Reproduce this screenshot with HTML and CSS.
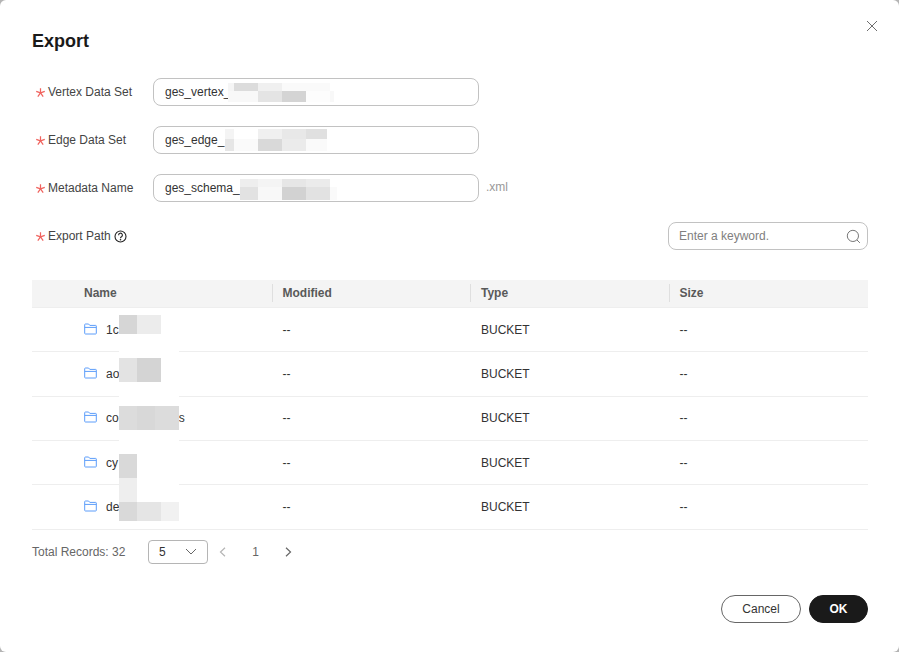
FILE: index.html
```html
<!DOCTYPE html>
<html lang="en">
<head>
<meta charset="utf-8">
<title>Export</title>
<link rel="stylesheet" href="styles.css">
</head>
<body>
<div class="dialog">
  <button class="close" aria-label="Close"><svg width="12" height="12" viewBox="0 0 12 12"><path d="M1 1l10 10M11 1L1 11" stroke="#6e6e6e" stroke-width="1" fill="none"/></svg></button>
  <h1 class="title">Export</h1>

  <div class="form-row">
    <label class="label"><svg class="star" viewBox="0 0 8 8"><path d="M4 .2V4.4M.2 3l3.8 1.4M7.8 3L4 4.4M1.6 7.6L4 4.4M6.4 7.6L4 4.4" stroke="#f0635e" stroke-width="1.1" fill="none"/></svg>Vertex Data Set</label>
    <div class="input"><span>ges_vertex_</span>
      <div class="mosaic m-vertex">
        <i class="b" style="left:75px;top:5px;width:6px;height:8px;background:#f5f5f5"></i><i class="b" style="left:81px;top:5px;width:24px;height:8px;background:#dcdcdc"></i><i class="b" style="left:105px;top:5px;width:24px;height:8px;background:#f0f0f0"></i><i class="b" style="left:129px;top:5px;width:48px;height:8px;background:#fafafa"></i>
        <i class="b" style="left:75px;top:13px;width:30px;height:11px;background:#f8f8f8"></i><i class="b" style="left:105px;top:13px;width:24px;height:11px;background:#e4e4e4"></i><i class="b" style="left:129px;top:13px;width:24px;height:11px;background:#d4d4d4"></i><i class="b" style="left:153px;top:13px;width:24px;height:11px;background:#fdfdfd"></i><i class="b" style="left:177px;top:13px;width:4px;height:11px;background:#f8f8f8"></i>
      </div>
    </div>
  </div>

  <div class="form-row">
    <label class="label"><svg class="star" viewBox="0 0 8 8"><path d="M4 .2V4.4M.2 3l3.8 1.4M7.8 3L4 4.4M1.6 7.6L4 4.4M6.4 7.6L4 4.4" stroke="#f0635e" stroke-width="1.1" fill="none"/></svg>Edge Data Set</label>
    <div class="input"><span>ges_edge_</span>
      <div class="mosaic">
        <i class="b" style="left:72px;top:3px;width:9px;height:10px;background:#f4f4f4"></i><i class="b" style="left:105px;top:3px;width:24px;height:10px;background:#f0f0f0"></i><i class="b" style="left:129px;top:3px;width:24px;height:10px;background:#e8e8e8"></i><i class="b" style="left:153px;top:3px;width:21px;height:10px;background:#e0e0e0"></i>
        <i class="b" style="left:72px;top:13px;width:9px;height:12px;background:#e6e6e6"></i><i class="b" style="left:81px;top:13px;width:24px;height:12px;background:#fafafa"></i><i class="b" style="left:105px;top:13px;width:24px;height:12px;background:#d9d9d9"></i><i class="b" style="left:129px;top:13px;width:24px;height:12px;background:#ebebeb"></i><i class="b" style="left:153px;top:13px;width:21px;height:12px;background:#fafafa"></i>
      </div>
    </div>
  </div>

  <div class="form-row">
    <label class="label"><svg class="star" viewBox="0 0 8 8"><path d="M4 .2V4.4M.2 3l3.8 1.4M7.8 3L4 4.4M1.6 7.6L4 4.4M6.4 7.6L4 4.4" stroke="#f0635e" stroke-width="1.1" fill="none"/></svg>Metadata Name</label>
    <div class="input"><span>ges_schema_</span>
      <div class="mosaic">
        <i class="b" style="left:87px;top:5px;width:18px;height:8px;background:#eeeeee"></i><i class="b" style="left:105px;top:5px;width:24px;height:8px;background:#f4f4f4"></i><i class="b" style="left:129px;top:5px;width:24px;height:8px;background:#e6e6e6"></i><i class="b" style="left:153px;top:5px;width:24px;height:8px;background:#ebebeb"></i>
        <i class="b" style="left:87px;top:13px;width:18px;height:13px;background:#e2e2e2"></i><i class="b" style="left:105px;top:13px;width:24px;height:13px;background:#f8f8f8"></i><i class="b" style="left:129px;top:13px;width:24px;height:13px;background:#d2d2d2"></i><i class="b" style="left:153px;top:13px;width:24px;height:13px;background:#e2e2e2"></i><i class="b" style="left:177px;top:13px;width:7px;height:13px;background:#fafafa"></i>
      </div>
    </div>
    <span class="suffix">.xml</span>
  </div>

  <div class="form-row path-row">
    <label class="label"><svg class="star" viewBox="0 0 8 8"><path d="M4 .2V4.4M.2 3l3.8 1.4M7.8 3L4 4.4M1.6 7.6L4 4.4M6.4 7.6L4 4.4" stroke="#f0635e" stroke-width="1.1" fill="none"/></svg>Export Path<svg class="help" width="13" height="13" viewBox="0 0 13 13"><circle cx="6.5" cy="6.5" r="5.5" stroke="#222" stroke-width="1.1" fill="none"/><path d="M4.6 5.2a1.9 1.9 0 1 1 2.9 1.5c-.7.4-1 .7-1 1.5" stroke="#222" stroke-width="1.1" fill="none"/><circle cx="6.5" cy="9.8" r=".8" fill="#222"/></svg></label>
    <div class="search"><span>Enter a keyword.</span><svg width="15" height="15" viewBox="0 0 15 15"><circle cx="6.9" cy="6.9" r="5.6" stroke="#777" fill="none"/><path d="M10.9 10.9l3 3" stroke="#777" fill="none"/></svg></div>
  </div>

  <div class="table-wrap">
    <table class="table">
      <thead>
        <tr><th class="c0"></th><th class="first"><span>Name</span></th><th><span>Modified</span></th><th><span>Type</span></th><th><span>Size</span></th></tr>
      </thead>
      <tbody>
        <tr><td></td><td class="first"><span class="nm"><svg class="folder" width="13" height="12" viewBox="0 0 13 12"><path d="M.7 10.3V1.7a.7.7 0 0 1 .7-.7h3.2l1.2 1.4h5.8a.7.7 0 0 1 .7.7v7.2a.7.7 0 0 1-.7.7H1.4a.7.7 0 0 1-.7-.7zM.7 4.4h11.6" stroke="#5c9dfa" fill="none"/></svg>1c</span></td><td>--</td><td>BUCKET</td><td>--</td></tr>
        <tr><td></td><td class="first"><span class="nm"><svg class="folder" width="13" height="12" viewBox="0 0 13 12"><path d="M.7 10.3V1.7a.7.7 0 0 1 .7-.7h3.2l1.2 1.4h5.8a.7.7 0 0 1 .7.7v7.2a.7.7 0 0 1-.7.7H1.4a.7.7 0 0 1-.7-.7zM.7 4.4h11.6" stroke="#5c9dfa" fill="none"/></svg>ao</span></td><td>--</td><td>BUCKET</td><td>--</td></tr>
        <tr><td></td><td class="first"><span class="nm"><svg class="folder" width="13" height="12" viewBox="0 0 13 12"><path d="M.7 10.3V1.7a.7.7 0 0 1 .7-.7h3.2l1.2 1.4h5.8a.7.7 0 0 1 .7.7v7.2a.7.7 0 0 1-.7.7H1.4a.7.7 0 0 1-.7-.7zM.7 4.4h11.6" stroke="#5c9dfa" fill="none"/></svg>co<span class="name-gap"></span>s</span></td><td>--</td><td>BUCKET</td><td>--</td></tr>
        <tr><td></td><td class="first"><span class="nm"><svg class="folder" width="13" height="12" viewBox="0 0 13 12"><path d="M.7 10.3V1.7a.7.7 0 0 1 .7-.7h3.2l1.2 1.4h5.8a.7.7 0 0 1 .7.7v7.2a.7.7 0 0 1-.7.7H1.4a.7.7 0 0 1-.7-.7zM.7 4.4h11.6" stroke="#5c9dfa" fill="none"/></svg>cy</span></td><td>--</td><td>BUCKET</td><td>--</td></tr>
        <tr><td></td><td class="first"><span class="nm"><svg class="folder" width="13" height="12" viewBox="0 0 13 12"><path d="M.7 10.3V1.7a.7.7 0 0 1 .7-.7h3.2l1.2 1.4h5.8a.7.7 0 0 1 .7.7v7.2a.7.7 0 0 1-.7.7H1.4a.7.7 0 0 1-.7-.7zM.7 4.4h11.6" stroke="#5c9dfa" fill="none"/></svg>de</span></td><td>--</td><td>BUCKET</td><td>--</td></tr>
      </tbody>
    </table>
    <div class="mosaic table-mosaic">
      <i class="b" style="left:87px;top:35px;width:18px;height:19px;background:#d6d6d6"></i><i class="b" style="left:105px;top:35px;width:24px;height:19px;background:#ececec"></i>
      <i class="b" style="left:87px;top:54px;width:60px;height:24px;background:#fff"></i>
      <i class="b" style="left:87px;top:78px;width:18px;height:24px;background:#e3e3e3"></i><i class="b" style="left:105px;top:78px;width:24px;height:24px;background:#d4d4d4"></i>
      <i class="b" style="left:87px;top:102px;width:60px;height:24px;background:#fff"></i>
      <i class="b" style="left:87px;top:126px;width:18px;height:24px;background:#dcdcdc"></i><i class="b" style="left:105px;top:126px;width:18px;height:24px;background:#d8d8d8"></i><i class="b" style="left:123px;top:126px;width:24px;height:24px;background:#dcdcdc"></i>
      <i class="b" style="left:87px;top:150px;width:60px;height:24px;background:#fff"></i>
      <i class="b" style="left:87px;top:174px;width:18px;height:24px;background:#d9d9d9"></i><i class="b" style="left:105px;top:174px;width:42px;height:24px;background:#fff"></i>
      <i class="b" style="left:87px;top:198px;width:18px;height:24px;background:#eeeeee"></i><i class="b" style="left:105px;top:198px;width:42px;height:24px;background:#fff"></i>
      <i class="b" style="left:87px;top:222px;width:18px;height:19px;background:#d9d9d9"></i><i class="b" style="left:105px;top:222px;width:24px;height:19px;background:#e5e5e5"></i><i class="b" style="left:129px;top:222px;width:18px;height:19px;background:#f1f1f1"></i>
    </div>
  </div>

  <div class="pager">
    <span class="total">Total Records: 32</span>
    <div class="select"><span>5</span><svg width="12" height="7" viewBox="0 0 12 7"><path d="M1 1l5 5 5-5" stroke="#666" fill="none"/></svg></div>
    <svg class="arrow" width="7" height="10" viewBox="0 0 7 10"><path d="M6 .8L1.5 5 6 9.2" stroke="#b5b5b5" stroke-width="1.2" fill="none"/></svg>
    <span class="page">1</span>
    <svg class="arrow" width="7" height="10" viewBox="0 0 7 10"><path d="M1 .8L5.5 5 1 9.2" stroke="#666" stroke-width="1.2" fill="none"/></svg>
  </div>

  <div class="footer">
    <button class="btn btn-cancel">Cancel</button>
    <button class="btn btn-ok">OK</button>
  </div>
</div>
</body>
</html>
```
FILE: styles.css
```css
* { box-sizing: border-box; }
html, body { margin: 0; height: 100%; }
body {
  background: #b4b4b4;
  font-family: "Liberation Sans", Arial, sans-serif;
  font-size: 12px;
  color: #333;
  overflow: hidden;
}
.dialog {
  position: relative;
  width: 899px;
  height: 652px;
  background: #fff;
  border-radius: 6px;
  padding: 30px 31px 0 32px;
}
.close {
  position: absolute;
  top: 20px;
  right: 21px;
  padding: 0;
  border: 0;
  background: none;
  display: flex;
}
.title {
  margin: 0 0 26px;
  font-size: 18px;
  line-height: 22px;
  font-weight: 700;
  color: #1a1a1a;
}
.form-row {
  display: flex;
  align-items: center;
  height: 28px;
  margin-bottom: 20px;
}
.label {
  width: 121px;
  display: flex;
  align-items: center;
  color: #444;
  white-space: nowrap;
}
.star {
  flex: none;
  width: 9px;
  height: 9px;
  margin: 0 3px 0 4px;
}
.help { margin-left: 3px; }
.input {
  position: relative;
  width: 326px;
  height: 28px;
  border: 1px solid #c2c2c2;
  border-radius: 8px;
  padding: 0 11px;
  line-height: 26px;
  color: #333;
}
.suffix { margin-left: 7px; color: #999; margin-top: -3px; }
.path-row { justify-content: space-between; margin-bottom: 30px; }
.search {
  width: 200px;
  height: 28px;
  border: 1px solid #c2c2c2;
  border-radius: 8px;
  padding: 0 6px 0 10px;
  display: flex;
  align-items: center;
  justify-content: space-between;
  color: #808080;
}
.mosaic { position: absolute; left: -1px; top: -1px; width: 0; height: 0; }
.table-mosaic { left: 0; top: 0; }
.b { position: absolute; display: block; }
.table-wrap { position: relative; width: 836px; }
.table { width: 836px; border-collapse: collapse; table-layout: fixed; }
.table th {
  height: 27.4px;
  background: #f4f4f4;
  border-bottom: 1px solid #eeeeee;
  padding: 0;
  text-align: left;
  font-weight: 700;
  color: #595959;
  width: 198.5px;
}
.table th span {
  display: block;
  border-left: 1px solid #dfdfdf;
  margin-left: -1px;
  padding-left: 10px;
  line-height: 18px;
}
.table th.c0 { width: 42px; }
.table th.first span { border-left: 0; margin-left: 0; padding-left: 10px; }
.table td {
  height: 44.4px;
  padding: 0 0 0 10px;
  border-bottom: 1px solid #eeeeee;
  color: #333;
}
.nm { display: flex; align-items: center; }
.folder { margin-right: 9px; margin-top: -2px; }
.name-gap { width: 60px; }
.pager {
  display: flex;
  align-items: center;
  height: 24px;
  margin-top: 10px;
}
.total { width: 116px; color: #666; }
.select {
  width: 60px;
  height: 24px;
  border: 1px solid #b5b5b5;
  border-radius: 4px;
  display: flex;
  align-items: center;
  justify-content: space-between;
  padding: 0 10px;
  margin-right: 11px;
  color: #333;
}
.arrow { flex: none; }
.page { width: 59px; text-align: center; color: #666; }
.footer {
  display: flex;
  justify-content: flex-end;
  gap: 8px;
  margin-top: 31px;
}
.btn {
  height: 28px;
  border-radius: 14px;
  font-family: inherit;
  font-size: 12px;
  padding: 0;
}
.btn-cancel { width: 80px; background: #fff; border: 1px solid #666; color: #333; }
.btn-ok { width: 59px; background: #1a1a1a; border: 1px solid #1a1a1a; color: #fff; font-weight: 700; }
```
